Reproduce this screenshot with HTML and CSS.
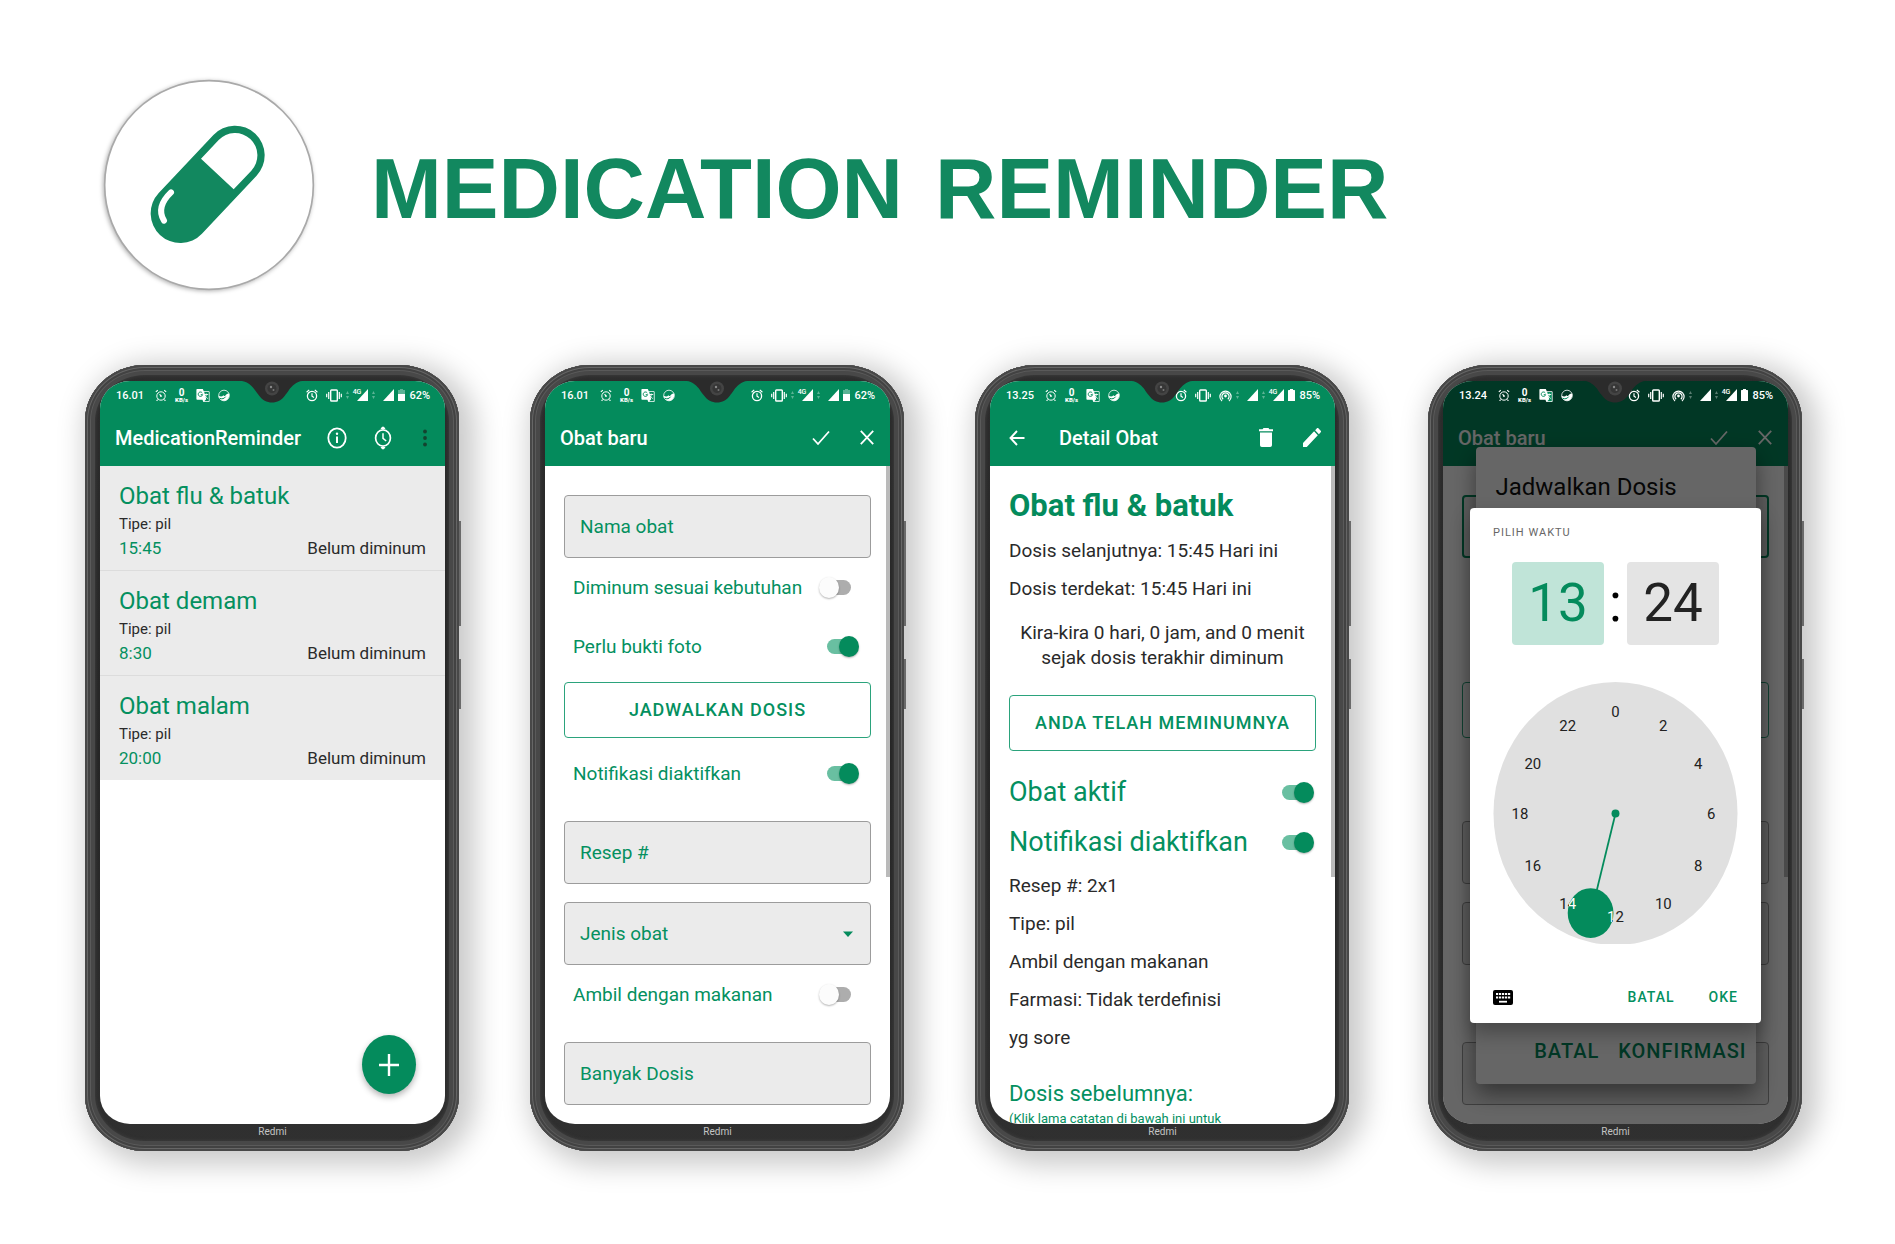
FILE: index.html
```html
<!DOCTYPE html>
<html lang="id">
<head>
<meta charset="utf-8">
<meta name="viewport" content="width=device-width, initial-scale=1">
<title>Medication Reminder</title>
<link rel="stylesheet" href="styles.css">
</head>
<body>
<svg class="sprite" width="0" height="0" aria-hidden="true">
  <symbol id="i-alarm-dot" viewBox="0 0 12 12"><circle cx="6" cy="6.5" r="4.2" fill="none" stroke="currentColor" stroke-width="1"/><path d="M.8 2.4 2.8.8M11.2 2.4 9.2.8M4.6 4.6 6 6.6M2.6 10.2 1.6 11.4M9.4 10.2l1 1.2" fill="none" stroke="currentColor" stroke-width="1.1"/><circle cx="6" cy="6.6" r=".9" fill="currentColor"/></symbol>
  <symbol id="i-translate" viewBox="0 0 14 14"><path d="M1.2.4h5.6l1 2.4h5c.5 0 .8.3.8.8v9.2c0 .5-.3.8-.8.8H7.4l-1-2.4H1.2c-.5 0-.8-.3-.8-.8V1.2c0-.5.3-.8.8-.8z" fill="currentColor"/><path d="M8.2 3.6h4.2c.3 0 .4.1.4.4v8.4c0 .3-.1.4-.4.4H8.2l2-2z" class="ink"/><path d="M6.3 4.5a2.2 2.2 0 1 0 .3 1.7H4.7" class="ink-line"/><path d="M8.2 6h4M10.2 5v1c0 1.8-1 3-1.6 3.4M9.2 7.2c.6 1.4 1.6 2.4 2.6 2.8" fill="none" stroke="currentColor" stroke-width=".9"/></symbol>
  <symbol id="i-bird" viewBox="0 0 12 12"><circle cx="6" cy="6" r="5.3" fill="none" stroke="currentColor" stroke-width=".8"/><path d="M.6 6c1.800 1.600 3.600 1.400 4.800-.2.500 1 1.300 1 2 .2C8.600 4.600 9.800 3.700 11.200 4.200c.6 3.400-1.400 6.600-4.800 7C3 11.400.6 9 .6 6z" fill="currentColor"/><path d="M1.600 8.800c2.200 1 4.800.4 6-1.600" class="ink-line"/></symbol>
  <symbol id="i-alarm" viewBox="0 0 12 13"><circle cx="6" cy="7" r="4.6" fill="none" stroke="currentColor" stroke-width="1.3"/><path d="M.6 3.2 3.2.9M11.4 3.2 8.8.9M6 4.2v3l2 1.3" fill="none" stroke="currentColor" stroke-width="1.2"/></symbol>
  <symbol id="i-vibrate" viewBox="0 0 16 13"><rect x="4.7" y="1" width="6.6" height="11" rx=".8" fill="none" stroke="currentColor" stroke-width="1.4"/><path d="M2.7 3v7M.7 4.7v3.6M13.3 3v7M15.3 4.7v3.6" stroke="currentColor" stroke-width="1.2"/></symbol>
  <symbol id="i-hotspot" viewBox="0 0 13 13"><circle cx="6.5" cy="7" r="1.4" fill="currentColor"/><path d="M4.2 10.2a3.600 3.600 0 1 1 4.600 0M3 12a5.600 5.600 0 1 1 7 0" fill="none" stroke="currentColor" stroke-width="1.2"/></symbol>
  <symbol id="i-traffic" viewBox="0 0 3 10"><path d="M0 4 1.5 1 3 4zM0 6h3L1.5 9z" fill="currentColor"/></symbol>
  <symbol id="i-signal" viewBox="0 0 11 12"><path d="M0 12 11 0v12z" fill="currentColor"/></symbol>
  <symbol id="i-battery-mid" viewBox="0 0 7 12"><path d="M2 0h3v1h2v11H0V1h2z" fill="currentColor" opacity=".35"/><path d="M0 5h7v7H0z" fill="currentColor"/></symbol>
  <symbol id="i-battery" viewBox="0 0 7 12"><path d="M2 0h3v1h1.5l.5.5V12H0V1.5L.5 1H2z" fill="currentColor"/></symbol>
  <symbol id="i-check" viewBox="0 0 18 16"><path d="m1 8.5 5 5.5L17 1.5" fill="none" stroke="currentColor" stroke-width="1.8"/></symbol>
  <symbol id="i-close" viewBox="0 0 14 15"><path d="m.8.8 12.4 13.4M13.2.8.8 14.2" fill="none" stroke="currentColor" stroke-width="1.8"/></symbol>
  <symbol id="i-notch" viewBox="0 0 70 22"><path d="M0 0C14 0 17 9 22 15C25 19.5 30 22 35 22C40 22 45 19.5 48 15C53 9 56 0 70 0Z" fill="#2b2b2b"/><circle cx="35" cy="8" r="7" fill="#444"/><circle cx="35" cy="8" r="4.5" fill="#363636"/><circle cx="34" cy="6.5" r="1.200" fill="#8a8a8a"/><circle cx="36.5" cy="9.5" r="1" fill="#777"/></symbol>
</svg>

<header class="brand">
  <svg class="brand-logo" viewBox="56 44 660 660" role="img" aria-label="Pill">
    <circle cx="386" cy="374" r="313" fill="#fff" stroke="#a9a9a9" stroke-width="5"/>
    <path d="M300 459 464 285" stroke="#12885f" stroke-width="178" stroke-linecap="round"/>
    <path d="M362 295 415 239A67 67 0 0 1 513 331L460 387Z" fill="#fff"/>
    <path d="M272 396Q226 440 251 481" fill="none" stroke="#fff" stroke-width="18" stroke-linecap="round"/>
  </svg>
  <h1 class="brand-title"><span>MEDICATION</span> <span>REMINDER</span></h1>
</header>

<main class="gallery">

  <section class="phone" aria-label="MedicationReminder">
    <div class="screen">
      <header class="top">
        <div class="status">
          <span class="clock">16.01</span>
          <svg class="s12"><use href="#i-alarm-dot"/></svg>
          <span class="rate"><b>0</b><small>KB/s</small></span>
          <svg class="s14"><use href="#i-translate"/></svg>
          <svg class="s12"><use href="#i-bird"/></svg>
          <div class="status-end">
            <svg class="alarm"><use href="#i-alarm"/></svg>
            <svg class="vibrate"><use href="#i-vibrate"/></svg>
            <svg class="traffic"><use href="#i-traffic"/></svg>
            <span class="net">4G<svg class="signal"><use href="#i-signal"/></svg></span>
            <svg class="traffic"><use href="#i-traffic"/></svg>
            <svg class="signal spaced"><use href="#i-signal"/></svg>
            <svg class="battery"><use href="#i-battery-mid"/></svg>
            <span class="level">62%</span>
          </div>
        </div>
        <div class="appbar appbar-menu">
          <h2 class="appbar-title">MedicationReminder</h2>
          <button class="action" aria-label="Info"><svg width="20" height="22" viewBox="0 0 20 22"><ellipse cx="10" cy="11" rx="8.7" ry="9.7" fill="none" stroke="currentColor" stroke-width="1.8"/><path d="M10 9.600v6.4" stroke="currentColor" stroke-width="2"/><circle cx="10" cy="6.7" r="1.2" fill="currentColor"/></svg></button>
          <button class="action" aria-label="Jadwal"><svg width="18" height="24" viewBox="0 0 18 24"><ellipse cx="9" cy="12" rx="7.4" ry="8.2" fill="none" stroke="currentColor" stroke-width="1.7"/><path d="M9 7.2V12.4l3.2 2.6" fill="none" stroke="currentColor" stroke-width="1.5"/><path d="M6.5 3 8 .8h2L11.5 3zM6.5 21 8 23.2h2l1.5-2.2z" fill="currentColor"/></svg></button>
          <button class="action action-more" aria-label="Menu"><svg width="4" height="18" viewBox="0 0 4 18"><circle cx="2" cy="2.5" r="1.9"/><circle cx="2" cy="9" r="1.9"/><circle cx="2" cy="15.5" r="1.9"/></svg></button>
        </div>
      </header>
      <ul class="meds">
        <li class="med"><h3>Obat flu &amp; batuk</h3><p>Tipe: pil</p><div class="med-row"><time>15:45</time><span>Belum diminum</span></div></li>
        <li class="med"><h3>Obat demam</h3><p>Tipe: pil</p><div class="med-row"><time>8:30</time><span>Belum diminum</span></div></li>
        <li class="med"><h3>Obat malam</h3><p>Tipe: pil</p><div class="med-row"><time>20:00</time><span>Belum diminum</span></div></li>
      </ul>
      <button class="fab" aria-label="Tambah obat"><svg width="20" height="22" viewBox="0 0 20 22"><path d="M10 0v22M0 11h20" stroke="currentColor" stroke-width="2.4"/></svg></button>
    </div>
    <svg class="notch"><use href="#i-notch"/></svg>
    <span class="maker">Redmi</span>
  </section>

  <section class="phone" aria-label="Obat baru">
    <div class="screen">
      <header class="top">
        <div class="status">
          <span class="clock">16.01</span>
          <svg class="s12"><use href="#i-alarm-dot"/></svg>
          <span class="rate"><b>0</b><small>KB/s</small></span>
          <svg class="s14"><use href="#i-translate"/></svg>
          <svg class="s12"><use href="#i-bird"/></svg>
          <div class="status-end">
            <svg class="alarm"><use href="#i-alarm"/></svg>
            <svg class="vibrate"><use href="#i-vibrate"/></svg>
            <svg class="traffic"><use href="#i-traffic"/></svg>
            <span class="net">4G<svg class="signal"><use href="#i-signal"/></svg></span>
            <svg class="traffic"><use href="#i-traffic"/></svg>
            <svg class="signal spaced"><use href="#i-signal"/></svg>
            <svg class="battery"><use href="#i-battery-mid"/></svg>
            <span class="level">62%</span>
          </div>
        </div>
        <div class="appbar">
          <h2 class="appbar-title">Obat baru</h2>
          <button class="action" aria-label="Simpan"><svg width="18" height="16"><use href="#i-check"/></svg></button>
          <button class="action" aria-label="Tutup"><svg width="14" height="15"><use href="#i-close"/></svg></button>
        </div>
      </header>
      <form class="form">
        <input class="field" type="text" placeholder="Nama obat" aria-label="Nama obat">
        <label class="toggle-row"><span>Diminum sesuai kebutuhan</span><input class="toggle" type="checkbox"></label>
        <label class="toggle-row"><span>Perlu bukti foto</span><input class="toggle" type="checkbox" checked></label>
        <button class="outlined" type="button">JADWALKAN DOSIS</button>
        <label class="toggle-row"><span>Notifikasi diaktifkan</span><input class="toggle" type="checkbox" checked></label>
        <input class="field" type="text" placeholder="Resep #" aria-label="Resep #">
        <div class="select-wrap">
          <select class="field" aria-label="Jenis obat"><option>Jenis obat</option></select>
          <svg width="10" height="6" viewBox="0 0 10 6" aria-hidden="true"><path d="M0 .5h10L5 6z" fill="currentColor"/></svg>
        </div>
        <label class="toggle-row"><span>Ambil dengan makanan</span><input class="toggle" type="checkbox"></label>
        <input class="field" type="text" placeholder="Banyak Dosis" aria-label="Banyak Dosis">
      </form>
      <i class="scrollbar"></i>
    </div>
    <svg class="notch"><use href="#i-notch"/></svg>
    <span class="maker">Redmi</span>
  </section>

  <section class="phone" aria-label="Detail Obat">
    <div class="screen">
      <header class="top">
        <div class="status">
          <span class="clock">13.25</span>
          <svg class="s12"><use href="#i-alarm-dot"/></svg>
          <span class="rate"><b>0</b><small>KB/s</small></span>
          <svg class="s14"><use href="#i-translate"/></svg>
          <svg class="s12"><use href="#i-bird"/></svg>
          <div class="status-end">
            <svg class="alarm"><use href="#i-alarm"/></svg>
            <svg class="vibrate"><use href="#i-vibrate"/></svg>
            <svg class="hotspot"><use href="#i-hotspot"/></svg>
            <svg class="traffic"><use href="#i-traffic"/></svg>
            <svg class="signal spaced"><use href="#i-signal"/></svg>
            <svg class="traffic"><use href="#i-traffic"/></svg>
            <span class="net">4G<svg class="signal"><use href="#i-signal"/></svg></span>
            <svg class="battery"><use href="#i-battery"/></svg>
            <span class="level">85%</span>
          </div>
        </div>
        <div class="appbar appbar-back">
          <button class="action" aria-label="Kembali"><svg width="16" height="16" viewBox="0 0 16 16"><path d="M15.5 8H1.5M8 1 1.5 8 8 15" fill="none" stroke="currentColor" stroke-width="1.9"/></svg></button>
          <h2 class="appbar-title">Detail Obat</h2>
          <button class="action" aria-label="Hapus"><svg width="14" height="19" viewBox="0 0 14 19"><path d="M1 4.400h12V17c0 1-.8 2-1.8 2H2.8C1.800 19 1 18 1 17zM4.500 0h5l.9 1.200H14V3.200H0V1.200h3.600z" fill="currentColor"/></svg></button>
          <button class="action" aria-label="Ubah"><svg width="18" height="19" viewBox="3 3 18 18" preserveAspectRatio="none"><path d="M3 17.250V21h3.750L17.810 9.940l-3.750-3.750L3 17.250zM20.710 7.040a1 1 0 0 0 0-1.410l-2.340-2.340a1 1 0 0 0-1.410 0l-1.830 1.830 3.750 3.750 1.830-1.830z" fill="currentColor"/></svg></button>
        </div>
      </header>
      <article class="detail">
        <h3 class="detail-name">Obat flu &amp; batuk</h3>
        <p>Dosis selanjutnya: 15:45 Hari ini</p>
        <p>Dosis terdekat: 15:45 Hari ini</p>
        <p class="since">Kira-kira 0 hari, 0 jam, and 0 menit sejak dosis terakhir diminum</p>
        <button class="outlined" type="button">ANDA TELAH MEMINUMNYA</button>
        <label class="toggle-row"><span>Obat aktif</span><input class="toggle" type="checkbox" checked></label>
        <label class="toggle-row"><span>Notifikasi diaktifkan</span><input class="toggle" type="checkbox" checked></label>
        <p>Resep #: 2x1</p>
        <p>Tipe: pil</p>
        <p>Ambil dengan makanan</p>
        <p>Farmasi: Tidak terdefinisi</p>
        <p>yg sore</p>
        <h4 class="history">Dosis sebelumnya:</h4>
        <small class="hint">(Klik lama catatan di bawah ini untuk</small>
      </article>
      <i class="scrollbar"></i>
    </div>
    <svg class="notch"><use href="#i-notch"/></svg>
    <span class="maker">Redmi</span>
  </section>

  <section class="phone" aria-label="Pilih waktu">
    <div class="screen screen-dimmed">
      <header class="top">
        <div class="status">
          <span class="clock">13.24</span>
          <svg class="s12"><use href="#i-alarm-dot"/></svg>
          <span class="rate"><b>0</b><small>KB/s</small></span>
          <svg class="s14"><use href="#i-translate"/></svg>
          <svg class="s12"><use href="#i-bird"/></svg>
          <div class="status-end">
            <svg class="alarm"><use href="#i-alarm"/></svg>
            <svg class="vibrate"><use href="#i-vibrate"/></svg>
            <svg class="hotspot"><use href="#i-hotspot"/></svg>
            <svg class="traffic"><use href="#i-traffic"/></svg>
            <svg class="signal spaced"><use href="#i-signal"/></svg>
            <svg class="traffic"><use href="#i-traffic"/></svg>
            <span class="net">4G<svg class="signal"><use href="#i-signal"/></svg></span>
            <svg class="battery"><use href="#i-battery"/></svg>
            <span class="level">85%</span>
          </div>
        </div>
        <div class="appbar">
          <h2 class="appbar-title">Obat baru</h2>
          <button class="action" aria-label="Simpan"><svg width="18" height="16"><use href="#i-check"/></svg></button>
          <button class="action" aria-label="Tutup"><svg width="14" height="15"><use href="#i-close"/></svg></button>
        </div>
      </header>
      <div class="form" aria-hidden="true">
        <div class="field field-active"></div>
        <div class="toggle-row"></div>
        <div class="toggle-row"></div>
        <div class="outlined"></div>
        <div class="toggle-row"></div>
        <div class="field"></div>
        <div class="field"></div>
        <div class="toggle-row"></div>
        <div class="field"></div>
      </div>
      <i class="scrollbar"></i>
      <div class="layer">
        <div class="dialog schedule">
          <h3>Jadwalkan Dosis</h3>
          <div class="schedule-actions"><button type="button">BATAL</button><button type="button">KONFIRMASI</button></div>
        </div>
      </div>
      <div class="layer scrim">
        <div class="dialog picker" role="dialog" aria-label="Pilih waktu">
          <h3>PILIH WAKTU</h3>
          <div class="digits">
            <button type="button" class="digit digit-on">13</button>
            <span class="colon">:</span>
            <button type="button" class="digit">24</button>
          </div>
          <svg class="dial" viewBox="-123 -132 246 264">
            <defs>
              <radialGradient id="under" gradientUnits="userSpaceOnUse" cx="0" cy="0" r="1" gradientTransform="translate(-25 100) scale(23 25)">
                <stop offset="1" stop-color="#fff"/><stop offset="1" stop-color="#222"/>
              </radialGradient>
            </defs>
            <ellipse rx="122.5" ry="132" fill="#e0e0e0"/>
            <path d="M0 0-19 78" stroke="#048b5c" stroke-width="1.8"/>
            <circle r="4" fill="#048b5c"/>
            <ellipse cx="-25" cy="100" rx="23" ry="25" fill="#048b5c"/>
            <g class="hours">
              <text x="0" y="-97">0</text><text x="48" y="-83">2</text><text x="83" y="-45">4</text><text x="96" y="6">6</text><text x="83" y="58">8</text><text x="48" y="96">10</text><text x="0" y="109" fill="url(#under)">12</text><text x="-48" y="96" fill="url(#under)">14</text><text x="-83" y="58">16</text><text x="-96" y="6">18</text><text x="-83" y="-45">20</text><text x="-48" y="-83">22</text>
            </g>
          </svg>
          <div class="picker-actions">
            <button type="button" class="keyboard" aria-label="Papan ketik"><svg width="20" height="15" viewBox="0 0 20 15"><rect width="20" height="15" rx="2" fill="#000"/><path d="M3 4h2.2M6 4h2.2M9 4h2.2M12 4h2.2M15 4h2.2M3 7.5h2.2M6 7.5h2.2M9 7.5h2.2M12 7.5h2.2M15 7.5h2.2" stroke="#fff" stroke-width="2"/><path d="M6 11.7h8" stroke="#fff" stroke-width="1.8"/></svg></button>
            <button type="button">BATAL</button>
            <button type="button">OKE</button>
          </div>
        </div>
      </div>
    </div>
    <svg class="notch"><use href="#i-notch"/></svg>
    <span class="maker">Redmi</span>
  </section>

</main>
</body>
</html>
```
FILE: styles.css
```css
:root {
  --green: #048b5c;
  --green-text: #04905f;
  --brand: #12885f;
  --ink: #2a2a2a;
}

* { box-sizing: border-box; }

body {
  margin: 0;
  background: #fff;
  color: var(--ink);
  font-family: Roboto, "Liberation Sans", sans-serif;
}

h1, h2, h3, h4, p, ul { margin: 0; padding: 0; }

button {
  border: 0;
  padding: 0;
  background: none;
  color: inherit;
  font: inherit;
}

svg { display: block; flex: none; }
.sprite { position: absolute; }

/* Brand header */
.brand {
  display: flex;
  align-items: center;
  gap: 52px;
  padding: 75px 40px 0 99px;
}
.brand-logo {
  width: 220px;
  height: 220px;
  filter: drop-shadow(-1px 1px 2px rgba(0, 0, 0, .3));
}
.brand-title {
  display: flex;
  flex-wrap: wrap;
  column-gap: 32px;
  padding-top: 8px;
  color: var(--brand);
  font: bold 85px/96px "Liberation Sans", Arial, sans-serif;
}

/* Phones */
.gallery {
  display: flex;
  flex-wrap: wrap;
  gap: 71px;
  padding: 70px 93px 93px 85px;
}
.phone {
  position: relative;
  display: flex;
  flex-direction: column;
  flex: 0 0 374px;
  padding: 16px 14px 0 15px;
  border-radius: 60px / 56px;
  background: linear-gradient(#343434, #2c2c2c 16px, #262626 50%, #303030);
  box-shadow:
    inset 0 0 0 2px #484848,
    inset 0 0 0 3px #666,
    inset 0 0 0 5px #424242,
    inset 0 0 0 6px #5a5a5a,
    inset 0 0 0 10px #484848,
    inset 0 0 3px 11px #3a3a3a,
    8px 6px 28px 8px rgba(0, 0, 0, .21);
}
.phone:last-child { margin-left: auto; }
.phone::before, .phone::after {
  content: "";
  position: absolute;
  left: 100%;
  width: 2px;
  background: #6a6a6a;
}
.phone::before { top: 156px; height: 105px; }
.phone::after { top: 294px; height: 50px; }
.screen {
  position: relative;
  aspect-ratio: 345 / 743;
  overflow: hidden;
  border-radius: 30px / 28px;
  background: #fff;
}
.notch {
  position: absolute;
  z-index: 3;
  top: 15px;
  left: calc(50% - 35px);
  width: 70px;
  height: 23px;
}
.maker {
  color: #c4c4c4;
  font-size: 10px;
  line-height: 16px;
  text-align: center;
  padding-bottom: 11px;
}

/* Status bar */
.top { background: var(--green); color: #fff; }
.status {
  position: relative;
  z-index: 2;
  display: flex;
  align-items: center;
  gap: 8px;
  height: 28px;
  padding: 0 15px 0 16px;
  font-size: 11px;
  font-weight: 500;
}
.clock { margin-right: 3px; }
.s12 { width: 12px; height: 13px; }
.s14 { width: 14px; height: 15px; }
.ink { fill: var(--green); }
.ink-line { fill: none; stroke: var(--green); stroke-width: 1; }
.rate {
  display: flex;
  flex-direction: column;
  align-items: center;
  font-size: 10px;
  line-height: 9px;
}
.rate small { font-size: 6px; line-height: 6px; font-weight: 900; }
.status-end {
  display: flex;
  align-items: center;
  gap: 4px;
  margin-left: auto;
}
.alarm { width: 12px; height: 13px; margin-right: 4px; }
.vibrate { width: 16px; height: 13px; }
.hotspot { width: 13px; height: 13px; margin-left: 4px; }
.traffic { width: 3px; height: 10px; opacity: .35; }
.signal { width: 11px; height: 12px; }
.spaced { margin-left: 4px; }
.battery { width: 7px; height: 12px; }
.net {
  display: flex;
  font-size: 7px;
  line-height: 7px;
}
.net .signal { margin-left: -4px; }

/* App bar */
.appbar {
  display: flex;
  align-items: center;
  height: 57px;
  padding-left: 15px;
}
.appbar-title {
  flex: 1;
  font-size: 20px;
  line-height: 28px;
  font-weight: 500;
}
.appbar-menu { padding-right: 2px; }
.appbar-back { padding-left: 4px; }
.appbar-back .appbar-title { padding-left: 19px; }
.action {
  display: grid;
  place-items: center;
  width: 46px;
  height: 46px;
}
.action-more { width: 37px; fill: #14432f; }

/* Medicine list */
.meds { list-style: none; }
.med {
  padding: 14px 19px 10px;
  background: #ebebeb;
  border-bottom: 1px solid #dcdcdc;
}
.med:last-child { border-bottom: 0; }
.med h3 {
  color: var(--green-text);
  font-size: 24px;
  line-height: 32px;
  font-weight: 400;
}
.med p { font-size: 15px; line-height: 24px; }
.med-row {
  display: flex;
  justify-content: space-between;
  font-size: 17px;
  line-height: 24px;
}
.med-row time { color: var(--green-text); }

.fab {
  position: absolute;
  right: 29px;
  bottom: 30px;
  display: grid;
  place-items: center;
  width: 54px;
  height: 59px;
  border-radius: 50%;
  background: var(--green);
  color: #fff;
  box-shadow: 0 3px 6px rgba(0, 0, 0, .3);
}

.scrollbar {
  position: absolute;
  top: 85px;
  right: 0;
  width: 4px;
  height: 411px;
  background: #bababa;
}

/* Form */
.form {
  display: flex;
  flex-direction: column;
  padding: 11px 19px 19px;
}
.field {
  appearance: none;
  width: 100%;
  height: 63px;
  margin: 18px 0 0;
  padding: 0 15px;
  border: 1px solid #9c9c9c;
  border-radius: 4px;
  background: #ebebeb;
  color: var(--green-text);
  font: 19px/24px Roboto, sans-serif;
}
.field::placeholder { color: inherit; opacity: 1; }
.field-active { border: 2px solid var(--green); }
.select-wrap { display: grid; color: var(--green); }
.select-wrap > * { grid-area: 1 / 1; }
.select-wrap > svg {
  place-self: center end;
  margin: 18px 18px 0 0;
  pointer-events: none;
}
.toggle-row {
  display: flex;
  align-items: center;
  justify-content: space-between;
  height: 59px;
  padding: 0 12px 0 9px;
  color: var(--green-text);
  font-size: 19px;
  line-height: 24px;
}
.toggle {
  appearance: none;
  display: grid;
  align-items: center;
  flex: none;
  width: 40px;
  height: 22px;
  margin: 0;
}
.toggle::before, .toggle::after { content: ""; grid-area: 1 / 1; }
.toggle::before {
  height: 15px;
  margin: 0 8px;
  border-radius: 8px;
  background: #adadad;
}
.toggle::after {
  width: 20px;
  height: 21px;
  border-radius: 50%;
  background: #fcfcfc;
  box-shadow: 0 1px 2px rgba(0, 0, 0, .3);
}
.toggle:checked::before { background: #69bfa1; }
.toggle:checked::after { justify-self: end; background: var(--green); }
.outlined {
  width: 100%;
  height: 56px;
  margin: 6px 0;
  border: 1px solid #2ba37c;
  border-radius: 4px;
  color: var(--green-text);
  font-size: 18px;
  line-height: 24px;
  font-weight: 500;
  letter-spacing: 1px;
}

/* Detail */
.detail { padding: 14px 19px 0; }
.detail p { font-size: 19px; line-height: 38px; }
.detail-name {
  color: var(--green);
  font-size: 31px;
  line-height: 52px;
  font-weight: 700;
}
.detail .since {
  margin: 12px 0 25px;
  line-height: 25px;
  text-align: center;
}
.detail .outlined { margin: 0 0 16px; }
.detail .toggle-row {
  height: 50px;
  padding: 0 2px 0 0;
  font-size: 27px;
  line-height: 32px;
}
.history {
  margin-top: 23px;
  color: var(--green-text);
  font-size: 22px;
  line-height: 28px;
  font-weight: 400;
}
.hint {
  display: block;
  color: var(--green-text);
  font-size: 13px;
  line-height: 22px;
}

/* Dialogs */
.layer {
  position: absolute;
  inset: 0;
  display: grid;
  place-items: center;
  padding-top: 26px;
}
.scrim { background: rgba(0, 0, 0, .6); }
.screen-dimmed .ink { fill: #013724; }
.dialog {
  display: flex;
  flex-direction: column;
  border-radius: 4px;
  background: #fff;
}
.schedule {
  justify-content: space-between;
  width: 280px;
  height: 637px;
  padding: 24px 9px 21px 20px;
  box-shadow: 0 10px 22px rgba(0, 0, 0, .45);
}
.schedule h3 { font-size: 24px; line-height: 32px; font-weight: 400; color: #111; }
.schedule-actions {
  display: flex;
  justify-content: flex-end;
  gap: 19px;
  color: var(--green);
  font-size: 20px;
  line-height: 24px;
  font-weight: 500;
  letter-spacing: 1px;
}
.schedule-actions button, .picker-actions button { letter-spacing: inherit; }
.picker {
  width: 291px;
  padding: 17px 23px 6px;
  box-shadow: 0 10px 20px rgba(0, 0, 0, .3);
}
.picker h3 {
  color: #666;
  font-size: 11px;
  line-height: 16px;
  font-weight: 400;
  letter-spacing: 1px;
}
.digits {
  display: flex;
  align-items: center;
  justify-content: center;
  margin-top: 21px;
}
.digit {
  width: 92px;
  height: 83px;
  border-radius: 4px;
  background: #e4e4e4;
  color: #222;
  font-size: 53px;
  line-height: 83px;
}
.digit-on { background: #c0e4d8; color: var(--green); }
.colon {
  width: 23px;
  color: #000;
  font-size: 53px;
  line-height: 64px;
  text-align: center;
}
.dial { width: 100%; margin-top: 37px; height: auto; }
.hours { font-size: 15px; text-anchor: middle; fill: #222; }
.picker-actions {
  display: flex;
  align-items: center;
  gap: 34px;
  height: 40px;
  margin-top: 33px;
  color: var(--green-text);
  font-size: 14px;
  line-height: 16px;
  font-weight: 500;
  letter-spacing: 1px;
}
.keyboard { margin-right: auto; }
```
